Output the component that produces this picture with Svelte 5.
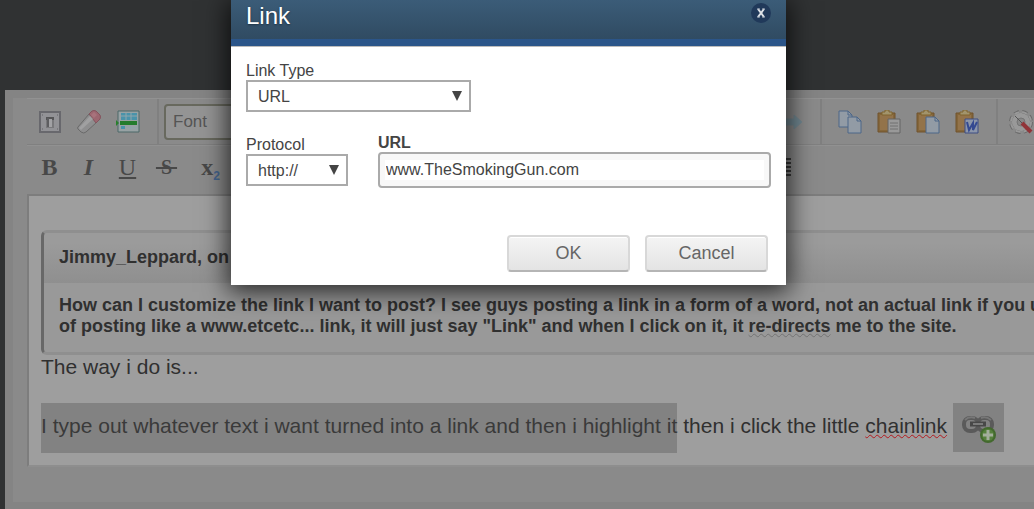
<script lang="ts">
	let linkType = $state('url');
	let protocol = $state('http');
	let url = $state('www.TheSmokingGun.com');
	let font = $state('');
	let open = $state(true);

	const close = () => (open = false);
</script>

{#snippet arrow()}
	<svg class="arrow" viewBox="0 0 10 10" aria-hidden="true"><path d="M0 0h10L5 10z" fill="#444" /></svg>
{/snippet}

{#snippet clipboard()}
	<path d="M1 3h17v19H1z" fill="#84663a" stroke="#70522c" />
	<path d="M3 5h13v15H3z" fill="#93734a" />
	<path d="M5 5V2h3V0h4v2h3v3z" fill="#a2946c" stroke="#80652f" />
{/snippet}

<div class="page">
	<div class="editor">
		<div class="inner">
			<div class="toolbar">
				<div class="group source">
					<button aria-label="Source">
						<svg viewBox="0 0 24 24">
							<rect x="2" y="2" width="20" height="20" fill="#929296" stroke="#68686d" stroke-width="2" />
							<path d="M4 5h1M19 5h1M4 19h1M19 19h1" stroke="#636366" />
							<rect x="8" y="7" width="8" height="11" fill="#78787b" />
							<path d="M8 7h8v3H8z" fill="#555557" />
							<rect x="9" y="8" width="2" height="9" fill="#5d5d60" />
							<rect x="11" y="9" width="3" height="8" fill="#a2a2a5" />
						</svg>
					</button>
					<button aria-label="Remove Format">
						<svg viewBox="0 0 24 24">
							<path d="M1 17 12 4l8 8L9 22q-2 2-5 0l-3-3q-1-1 0-2z" fill="#8e8e8f" stroke="#6a6a6a" />
							<path d="m12 4 3-3q2-1 4 0l4 4q1 2 0 4l-4 4z" fill="#9c6670" stroke="#84545d" />
							<path d="m2 18 11-12 3 3L4 20z" fill="#a0a0a1" />
							<path d="m14 5 3-3 3 3-3 3z" fill="#a8727c" />
						</svg>
					</button>
					<button aria-label="Insert Page Break">
						<svg viewBox="0 0 24 24">
							<path d="M2 1h21v21H2z" fill="#98a2a4" stroke="#4d6868" />
							<path d="M5 3h16v7H5zM5 16h4v3H5z" fill="#4993aa" />
							<path d="M5 6h16M10 3v7M15 3v7M10 18h11M15 16v4" stroke="#8fa5ab" />
							<path d="M4 11h17v4H4z" fill="#247c2d" />
							<path d="M0 10l3 3-3 3z" fill="#28802c" />
						</svg>
					</button>
				</div>
				<div class="group fonts">
					<select class="font" aria-label="Font" bind:value={font}>
						<option value="">Font</option>
					</select>
					<button class="last" aria-label="Redo">
						<svg viewBox="0 0 24 24"><path d="M4 9h11V5l8 7-8 7v-4H4z" fill="#718892" stroke="#748790" /></svg>
					</button>
				</div>
				<div class="group clip">
					<button aria-label="Copy">
						<svg viewBox="0 0 24 24">
							<g fill="#929ba5" stroke="#4c6688">
								<path d="M1 1h9l4 4v12H1z" />
								<path d="M10 1v4h4" fill="none" />
								<path d="M10 7h9l4 4v12H10z" />
								<path d="M19 7v4h4" fill="none" />
							</g>
						</svg>
					</button>
					<button aria-label="Paste">
						<svg viewBox="0 0 24 24">
							{@render clipboard()}
							<path d="M11 9h12v14H11z" fill="#999" stroke="#656565" />
							<path d="M13 13h8M13 16h8M13 19h8" stroke="#707070" />
						</svg>
					</button>
					<button aria-label="Paste as plain text">
						<svg viewBox="0 0 24 24">
							{@render clipboard()}
							<path d="M10 7h9l4 4v12H10z" fill="#929ba5" stroke="#4c6688" />
							<path d="M19 7v4h4" fill="none" stroke="#4c6688" />
						</svg>
					</button>
					<button aria-label="Paste from Word">
						<svg viewBox="0 0 24 24">
							{@render clipboard()}
							<path d="M10 9h13v14H10z" fill="#8c96aa" stroke="#3d4d82" />
							<path d="m12 12 2 8 4-7v7l4-8" fill="none" stroke="#344991" stroke-width="2" />
						</svg>
					</button>
				</div>
				<div class="group">
					<button aria-label="Tools">
						<svg viewBox="0 0 24 24">
							<circle cx="12" cy="12" r="10" fill="none" stroke="#6a6a6a" stroke-width="4" stroke-dasharray="5 3" />
							<circle cx="12" cy="12" r="10" fill="none" stroke="#999" stroke-width="2" stroke-dasharray="5 3" />
							<circle cx="12" cy="12" r="9" fill="#999" />
							<circle cx="12" cy="12" r="4" fill="#888" stroke="#747474" />
							<path d="m6 6 7 7" stroke="#555" />
							<path d="m13 13 9 9" stroke="#913438" stroke-width="4" />
						</svg>
					</button>
				</div>
			</div>
			<div class="toolbar second">
				<div class="group styles">
					<button class="letter"><b>B</b></button>
					<button class="letter"><i>I</i></button>
					<button class="letter"><u>U</u></button>
					<button class="letter"><s>&nbsp;S&nbsp;</s></button>
					<button class="letter sub"><b>x</b><small>2</small></button>
				</div>
				<button class="justify" aria-label="Justify">
					<svg viewBox="0 0 24 24"><path d="M1 4h22M1 8h22M1 12h22M1 16h22M1 20h22" stroke="#393939" stroke-width="2" /></svg>
				</button>
			</div>
			<div class="content">
				<div class="quote">
					<div class="cite">Jimmy_Leppard, on</div>
					<div class="quoted">
						How can I customize the link I want to post? I see guys posting a link in a form of a word, not an actual link if you u<br />
						of posting like a www.etcetc... link, it will just say "Link" and when I click on it, it <span class="grammar">re-directs</span> me to the site.
					</div>
				</div>
				<p>The way i do is...</p>
				<p class="line">
					<mark>I type out whatever text i want turned into a link and then i highlight it</mark>
					<span class="rest">then i click the little <span class="spelling">chainlink</span></span>
					<span class="chain">
						<svg viewBox="0 0 51 49" aria-hidden="true">
							<g fill="none" stroke="#5a5a5a" stroke-width="4">
								<rect x="11" y="15" width="14" height="13" rx="6" />
								<rect x="25" y="15" width="14" height="13" rx="6" />
							</g>
							<path d="M12 17q4-4 10-2M28 15q5-2 10 2" fill="none" stroke="#777" stroke-width="2" />
							<path d="M17 21h16" stroke="#484848" stroke-width="5" />
							<path d="M20 21h10" stroke="#7b7b7b" stroke-width="2" />
							<circle cx="35" cy="32" r="8" fill="#43692e" />
							<circle cx="35" cy="32" r="6" fill="#56803d" />
							<path d="M35 27v10M30 32h10" stroke="#a3ad9c" stroke-width="3" />
						</svg>
					</span>
				</p>
			</div>
		</div>
	</div>

	{#if open}
		<div class="overlay">
			<div class="dialog" role="dialog" aria-labelledby="dialog-title">
				<header>
					<h1 id="dialog-title">Link</h1>
					<button class="close" aria-label="Close" onclick={close}>
						<svg viewBox="0 0 20 20">
							<circle cx="10" cy="10" r="10" fill="#20395a" />
							<path d="m7 6 6 8M13 6l-6 8" stroke="#dce1e7" stroke-width="2" />
							<path d="M6 6h3M11 6h3M6 14h3M11 14h3" stroke="#aeb8c4" />
						</svg>
					</button>
				</header>
				<form onsubmit={(e) => e.preventDefault()}>
					<div class="field type">
						<label for="link-type">Link Type</label>
						<div class="select">
							<select id="link-type" bind:value={linkType}>
								<option value="url">URL</option>
							</select>
							{@render arrow()}
						</div>
					</div>
					<div class="row">
						<div class="field protocol">
							<label for="protocol">Protocol</label>
							<div class="select">
								<select id="protocol" bind:value={protocol}>
									<option value="http">http://</option>
								</select>
								{@render arrow()}
							</div>
						</div>
						<div class="field address">
							<label for="url">URL</label>
							<div class="input"><input id="url" type="text" bind:value={url} /></div>
						</div>
					</div>
					<footer>
						<button class="action" type="submit" onclick={close}>OK</button>
						<button class="action" type="button" onclick={close}>Cancel</button>
					</footer>
				</form>
			</div>
		</div>
	{/if}
</div>

<style>
	:global(body) {
		margin: 0;
		background: #303233;
	}

	.page {
		position: relative;
		overflow: hidden;
		padding: 90px 0 0 5px;
		font-family: 'Liberation Sans', Arial, sans-serif;
		color: #303030;
	}

	button,
	select,
	input {
		font: inherit;
		color: inherit;
	}

	button {
		padding: 0;
		border: 0;
		background: none;
		cursor: pointer;
	}

	.editor {
		background: #848484;
		padding: 8px 0 8px 8px;
	}

	.inner {
		background: #8a8a8a;
		padding: 0 0 35px 14px;
	}

	.toolbar {
		display: flex;
		height: 45px;
		border-top: 1px solid #929292;
		border-bottom: 1px solid #808080;
		overflow: hidden;
	}

	.toolbar.second {
		box-sizing: border-box;
		height: 49px;
		padding-bottom: 6px;
		border-top-color: #919191;
		border-bottom: 0;
	}

	.group {
		flex: none;
		display: flex;
		align-items: center;
		box-sizing: border-box;
		padding-left: 3px;
	}

	.group button,
	.justify {
		display: flex;
		align-items: center;
		justify-content: center;
		flex: none;
		width: 39px;
		height: 40px;
	}

	.group button svg,
	.justify svg {
		width: 24px;
		height: 24px;
	}

	.source {
		width: 132px;
		border-right: 2px solid #808080;
	}

	.fonts {
		width: 663px;
		padding: 0 10px 0 5px;
		border-right: 2px solid #808080;
	}

	.clip {
		width: 176px;
		padding-left: 8px;
		border-right: 2px solid #808080;
	}

	.font {
		width: 160px;
		height: 36px;
		padding: 0 7px;
		border: 2px solid #68695e;
		border-radius: 4px;
		background: #949494;
		color: #555;
		font-size: 17px;
		appearance: none;
	}

	.last {
		margin-left: auto;
	}

	.group .letter {
		font: 24px 'Liberation Serif', serif;
		color: #484848;
	}

	.letter i,
	.letter s {
		font-weight: bold;
	}

	.letter s {
		font-size: 20px;
	}

	.letter.sub {
		padding-left: 10px;
	}

	.sub small {
		align-self: flex-end;
		padding-bottom: 4px;
		font: bold 12px 'Liberation Sans', sans-serif;
		color: #44658f;
	}

	.styles {
		width: 733px;
	}

	.justify {
		align-self: center;
	}

	.content {
		border: 2px solid #7d7d7d;
		border-right: 0;
		border-bottom-color: #8e8e8e;
		background: #9e9e9e;
		padding: 34px 0 12px 12px;
		overflow: hidden;
		white-space: nowrap;
	}

	.quote {
		font-size: 18px;
		line-height: 21px;
		font-weight: bold;
	}

	.cite {
		padding: 14px 15px 15px;
		border-top: 3px solid #8f8f8f;
		border-left: 3px solid #686868;
		border-radius: 6px 0 0 0;
		background: linear-gradient(#9b9b9b 20%, #8f8f8f);
	}

	.quoted {
		padding: 12px 15px 15px;
		border-bottom: 3px solid #8f8f8f;
		border-left: 3px solid #686868;
		border-radius: 0 0 0 6px;
		background: #999;
	}

	.grammar {
		text-decoration: underline wavy #737373 1px;
	}

	.spelling {
		text-decoration: underline wavy #b5181e 1px;
		text-decoration-skip-ink: none;
	}

	p {
		margin: 0;
		font-size: 21px;
		line-height: 24px;
	}

	.line {
		display: flex;
		margin-top: 24px;
		line-height: 46px;
	}

	mark {
		height: 50px;
		background: #828282;
		color: #3a3a3a;
	}

	.rest {
		padding: 0 6px;
	}

	.chain {
		width: 51px;
		height: 49px;
		background: #828282;
	}

	.chain svg {
		display: block;
	}

	.overlay {
		position: absolute;
		inset: 0;
		display: flex;
		justify-content: center;
		align-items: flex-start;
		padding-right: 17px;
	}

	.dialog {
		width: 555px;
		background: #fff;
		box-shadow: 0 4px 24px 3px rgb(0 0 0 / 75%);
	}

	header {
		display: flex;
		justify-content: space-between;
		padding: 0 15px;
		height: 39px;
		background: linear-gradient(#3b5c78, #304b62);
		border-bottom: 7px solid #2b5589;
		box-shadow: 0 1px #bbb;
	}

	h1 {
		margin: 0;
		font-size: 24px;
		line-height: 32px;
		font-weight: normal;
		color: #fff;
		text-shadow: 0 1px 2px #1d3345;
	}

	.close {
		width: 20px;
		height: 20px;
		margin-top: 3px;
	}

	.close svg {
		display: block;
	}

	form {
		padding: 15px 15px 13px;
		font-size: 16px;
		color: #444;
	}

	label {
		display: block;
		line-height: 19px;
	}

	.type {
		width: 225px;
	}

	.row {
		display: flex;
		gap: 30px;
		margin-top: 22px;
	}

	.protocol {
		width: 102px;
	}

	.protocol label {
		padding-top: 1px;
	}

	.address {
		flex: 1;
	}

	.address label {
		font-weight: bold;
		line-height: 18px;
	}

	.select {
		position: relative;
	}

	.select select {
		display: block;
		width: 100%;
		height: 32px;
		padding: 0 10px;
		border: 2px solid #aaa;
		border-radius: 0;
		background: #fff;
		appearance: none;
	}

	.arrow {
		position: absolute;
		right: 9px;
		top: 11px;
		width: 10px;
		height: 10px;
		pointer-events: none;
	}

	.input {
		padding: 6px 5px;
		border: 2px solid #aaa;
		border-radius: 4px;
		background: #f8f8f8;
	}

	.input input {
		display: block;
		box-sizing: border-box;
		width: 100%;
		height: 20px;
		padding: 0 1px;
		border: 0;
		outline: 0;
		background: #fff;
	}

	footer {
		display: flex;
		justify-content: flex-end;
		gap: 15px;
		padding-right: 3px;
		margin-top: 47px;
	}

	.action {
		box-sizing: border-box;
		width: 123px;
		height: 37px;
		border: 2px solid #d8d8d8;
		border-bottom-color: #b5b5b5;
		border-radius: 4px;
		background: linear-gradient(#f4f4f4, #e4e4e4);
		box-shadow: inset 0 1px #fff;
		color: #666;
		font-size: 18px;
	}
</style>
